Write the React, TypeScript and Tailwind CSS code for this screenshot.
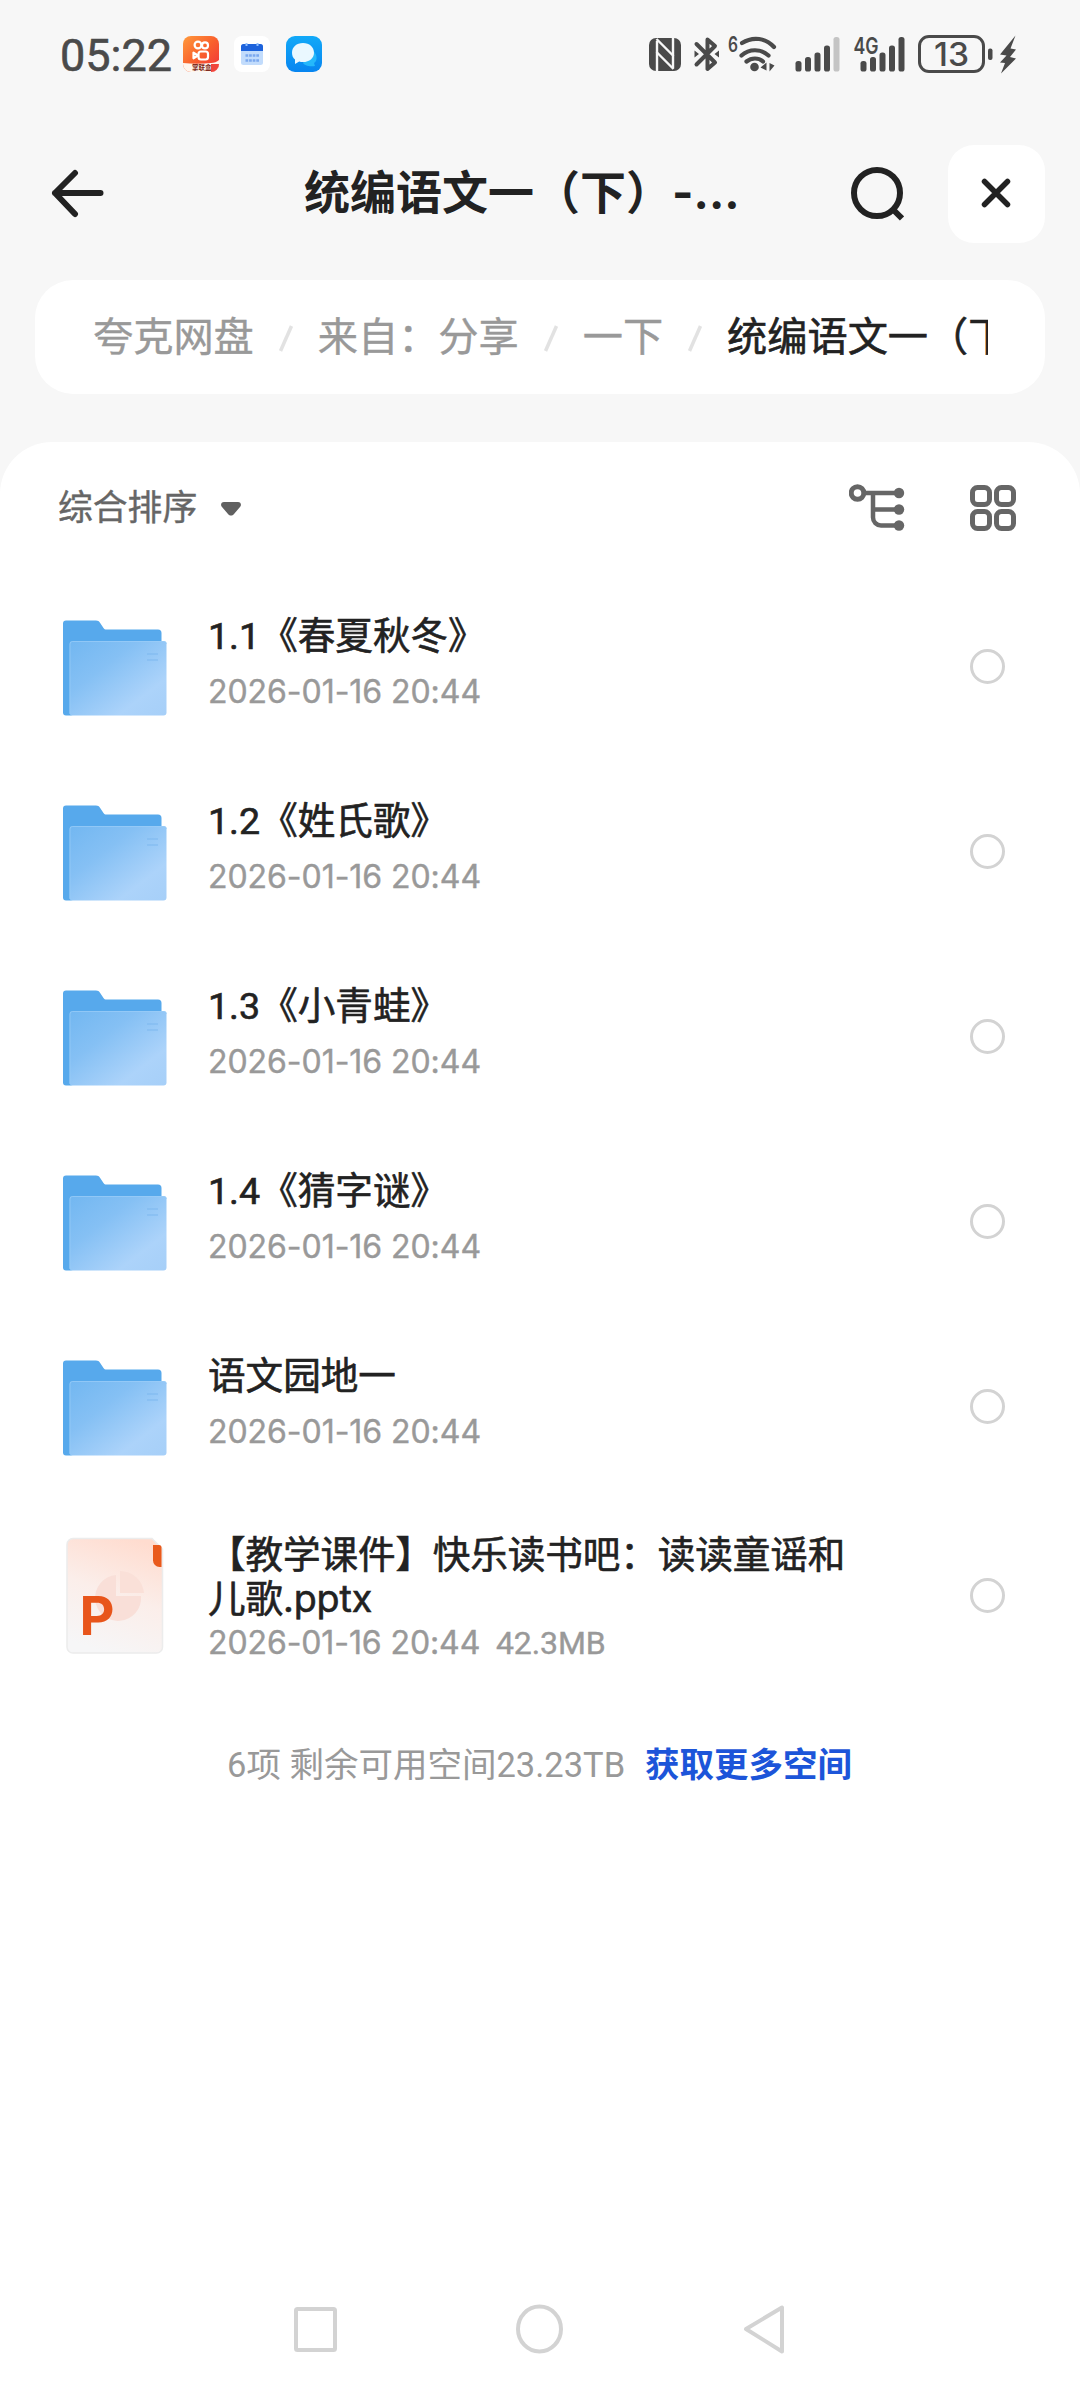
import type { ReactNode } from 'react';

const files = [
    { name: '1.1《春夏秋冬》', date: '2026-01-16 20:44' },
    { name: '1.2《姓氏歌》', date: '2026-01-16 20:44' },
    { name: '1.3《小青蛙》', date: '2026-01-16 20:44' },
    { name: '1.4《猜字谜》', date: '2026-01-16 20:44' },
    { name: '语文园地一', date: '2026-01-16 20:44' },
];

const StatusBar = () => (
    <div className="h-[108px] flex items-center pl-[60px] text-[#4a4a4a]">
        <span className="w-[123px] mt-0.5 text-[45px] leading-none font-[Roboto] [-webkit-text-stroke:0.6px_#4a4a4a]">05:22</span>

        {/* running apps */}
        <svg className="w-9 h-9" viewBox="0 0 36 36">
            <defs>
                <linearGradient id="ks" x1="0" y1="0" x2="1" y2="1">
                    <stop offset="0" stopColor="#ff9a3c" />
                    <stop offset="0.5" stopColor="#f9602d" />
                    <stop offset="1" stopColor="#f0303c" />
                </linearGradient>
            </defs>
            <rect width="36" height="36" rx="8" fill="url(#ks)" />
            <g fill="none" stroke="#fff" strokeWidth="2.2">
                <circle cx="15" cy="9" r="3.4" />
                <circle cx="22" cy="9.4" r="3" />
                <rect x="15.500" y="15.500" width="9.500" height="8" rx="2.400" />
                <path d="M15 19.500l-4.500-2.800v5.600z" strokeLinejoin="round" />
            </g>
            <path d="M0 27c9 1 18 1 28 0c3 0 6-1 8-3v4a8 8 0 0 1-8 8H8a8 8 0 0 1-8-8z" fill="#fff6ee" />
            <text x="9" y="34" fontSize="6.500" fontWeight="700" fill="#7a1f14">掌联盒</text>
            <path d="M28 28h8a8 8 0 0 1-8 8z" fill="#f0453c" />
        </svg>
        <svg className="w-9 h-9 ml-[15px]" viewBox="0 0 36 36">
            <rect width="36" height="36" rx="8" fill="#fff" />
            <rect x="7" y="8" width="22" height="21" rx="2.5" fill="#c2dcfc" />
            <path d="M7 15v-4.500a2.500 2.500 0 0 1 2.500-2.500h17a2.500 2.500 0 0 1 2.500 2.500V15z" fill="#1d63dc" />
            <path d="M12.500 7v3M23.500 7v3" stroke="#8fc0ff" strokeWidth="2" />
            <path d="M11.500 19.500h13.500M11.500 24.500h13.500" stroke="#7ba8ee" strokeWidth="2.600" strokeDasharray="2.700 0.900" />
        </svg>
        <svg className="w-9 h-9 ml-4" viewBox="0 0 36 36">
            <defs>
                <linearGradient id="msg" x1="0" y1="0" x2="0" y2="1">
                    <stop offset="0" stopColor="#12a9f8" />
                    <stop offset="1" stopColor="#0785f0" />
                </linearGradient>
            </defs>
            <rect width="36" height="36" rx="9" fill="url(#msg)" />
            <path d="M24 13c8 3 8 12 4 14l1 3c-6 1-11-1-12-3z" fill="#25b8fb" />
            <path d="M17 7c6.500 0 11 4.200 11 9.700s-4.500 9.300-11 9.300c-1.600 0-2.600-.2-3.800-.6L9 28v-4.500C7 22 6 19.500 6 16.700C6 11.200 10.500 7 17 7z" fill="#eaf8ff" />
        </svg>

        {/* system indicators */}
        <svg className="w-[380px] h-16 ml-[319px]" viewBox="642 22 380 64" fill="none">
            <rect x="650" y="38" width="32" height="33" rx="7" fill="#4a4a4a" />
            <path d="M658 72V41M674 37v31" stroke="#f7f7f7" strokeWidth="2.400" />
            <path d="M657.500 39L674.500 56M657.500 52L674.500 69" stroke="#f7f7f7" strokeWidth="2.400" />
            <path d="M697.500 44L716 62.500L708.500 69V39.500L716 46L697.500 64.500" stroke="#4a4a4a" strokeWidth="4" strokeLinejoin="round" strokeLinecap="round" />
            <path d="M695.500 50.500v7l4.500-3.500zM720 50.500v7l-4.500-3.500z" fill="#4a4a4a" />
            <text x="729" y="51.500" fontSize="21" fontWeight="600" fill="#4a4a4a" textLength="10" lengthAdjust="spacingAndGlyphs">6</text>
            <g stroke="#4a4a4a" strokeLinecap="round" strokeWidth="4.200">
                <path d="M742.500 55.500C750 48.500 762 48.500 769.500 55.500" />
                <path d="M743 43C754 36 767 38 775 47" />
                <path d="M747.500 61.500C752.500 57.500 759.500 57.500 764 61.500" />
            </g>
            <circle cx="755.500" cy="67" r="4.300" fill="#4a4a4a" />
            <path d="M761.500 67.500l6-5v8M770.500 63v8.500l5-6" fill="#4a4a4a" />
            <g fill="#4a4a4a">
                <rect x="796.500" y="61" width="6" height="10.500" rx="2.600" />
                <rect x="806" y="57" width="6" height="14.500" rx="2.600" />
                <rect x="815.500" y="52.500" width="6" height="19" rx="2.600" />
                <rect x="825" y="45.500" width="6" height="26" rx="2.600" />
                <rect x="834.500" y="37" width="6" height="34.500" rx="2.600" fill="#c4c4c4" />
                <text x="854.500" y="53.500" fontSize="23" fontWeight="600" textLength="25" lengthAdjust="spacingAndGlyphs">4G</text>
                <rect x="861.500" y="61" width="6" height="10.500" rx="2.600" />
                <rect x="871" y="57" width="6" height="14.500" rx="2.600" />
                <rect x="880.500" y="52.500" width="6" height="19" rx="2.600" />
                <rect x="890" y="45.500" width="6" height="26" rx="2.600" />
                <rect x="899.500" y="37" width="6" height="34.500" rx="2.600" />
            </g>
            <rect x="920.500" y="36.500" width="64" height="35" rx="9.500" stroke="#4a4a4a" strokeWidth="3" />
            <text x="935" y="66" fontSize="32" fontWeight="500" fill="#4a4a4a" textLength="35" lengthAdjust="spacingAndGlyphs">13</text>
            <rect x="989" y="48.500" width="4.500" height="11.500" rx="2" fill="#4a4a4a" />
            <path d="M1016.500 35.500L1001 54.500L1007.500 55.500L1001 62.500L1006 63L1002 73.500L1017 58.500L1011 57L1017 49.500L1011.500 48.500z" fill="#4a4a4a" />
        </svg>
    </div>
);

const FolderIcon = () => (
    <svg className="w-[104px] h-24 mt-[3px]" viewBox="0 0 104 96">
        <defs>
            <linearGradient id="folder" x1="0" y1="0" x2="1" y2="1">
                <stop offset="0" stopColor="#72b7f1" />
                <stop offset="0.35" stopColor="#85c0f4" />
                <stop offset="0.75" stopColor="#acd3fa" />
                <stop offset="1" stopColor="#a6cff8" />
            </linearGradient>
        </defs>
        <path d="M0 3.500A3 3 0 0 1 3 .5h30c2 0 3 .8 4 2.300l3.500 5.200c.8 1 1.500 1.500 3 1.500H95a3.500 3.500 0 0 1 3.500 3.500V70L8 95.500H3a3 3 0 0 1-3-3z" fill="#57a9ec" />
        <rect x="6.500" y="21" width="97" height="74.500" rx="3" fill="url(#folder)" />
        <path d="M7 94V24a2.500 2.500 0 0 1 2.500-2.500H101a2.500 2.500 0 0 1 2.500 2.500" fill="none" stroke="#9bcdf8" strokeOpacity="0.7" />
        <path d="M84 34h11M84 40h11" stroke="#79b5ee" strokeOpacity="0.6" strokeWidth="1.500" />
    </svg>
);

const PptIcon = () => (
    <svg className="w-[98px] h-[118px]" viewBox="0 0 98 118">
        <defs>
            <linearGradient id="ppt" x1="0.7" y1="0" x2="0.4" y2="1">
                <stop offset="0" stopColor="#ffdccf" />
                <stop offset="0.5" stopColor="#fbeeea" />
                <stop offset="1" stopColor="#f6f6f7" />
            </linearGradient>
        </defs>
        <path d="M7 1.500h79L96.500 12v98a6 6 0 0 1-6 6H7a6 6 0 0 1-6-6V7.500a6 6 0 0 1 6-6z" fill="url(#ppt)" stroke="#ececec" strokeWidth="1.500" />
        <path d="M50 38a23 23 0 1 0 25 21H50z" fill="#f9dfd8" />
        <path d="M54 34a24 24 0 0 1 24 22H54z" fill="#fae0d8" />
        <path d="M87 8h6a2.500 2.500 0 0 1 2.500 2.500V30h-2a6.500 6.500 0 0 1-6.500-6.500z" fill="#e95a1c" />
        <text x="13.500" y="97.500" fontSize="54" fontWeight="700" fill="#e8551b">P</text>
    </svg>
);

const FileRow = ({ icon, children }: { icon: ReactNode; children: ReactNode }) => (
    <div className="h-[185px] flex items-center pl-[63px] pr-[75px]">
        <div className="w-[145px] shrink-0 flex items-center">{icon}</div>
        <div className="flex-1">{children}</div>
        <div className="w-[35px] h-[35px] rounded-full border-[3px] border-[#d3d3d3]" />
    </div>
);

const Slash = () => (
    <svg className="w-[14px] h-[27px] mx-[25px] mt-0.5 shrink-0" viewBox="0 0 14 27">
        <path d="M12.500 1L1.500 26" stroke="#e2e2e2" strokeWidth="3.500" />
    </svg>
);

const App = () => {
    return (
        <div className="w-[1080px] h-[2387px] flex flex-col bg-[#f7f7f7] overflow-hidden font-[Inter,'Noto_Sans_CJK_SC',sans-serif]" lang="zh-CN">
            <StatusBar />

            {/* title bar */}
            <div className="h-[172px] flex items-center pl-[50px] pr-[35px]">
                <svg className="w-[54px] h-[50px]" viewBox="0 0 54 50" fill="none" stroke="#222" strokeWidth="6" strokeLinecap="round" strokeLinejoin="round">
                    <path d="M25 4L5 24L25 45M5 24H50.500" />
                </svg>
                <h1 className="ml-[200px] w-[544px] text-[46px] leading-none font-bold text-[#222] whitespace-nowrap mb-1">
                    统编语文一（下）-...
                </h1>
                <svg className="w-14 h-14" viewBox="0 0 56 56" fill="none" stroke="#222" strokeWidth="6">
                    <circle cx="29" cy="27" r="23" />
                    <path d="M45 43.500l9 9" />
                </svg>
                <div className="ml-auto w-[97px] h-[98px] rounded-[26px] bg-white flex items-center justify-center">
                    <svg className="w-8 h-8 mr-0.5 mb-0.5" viewBox="0 0 32 32" stroke="#222" strokeWidth="5.500" strokeLinecap="round">
                        <path d="M4.500 4.500l23 23M27.500 4.500L4.500 27.500" />
                    </svg>
                </div>
            </div>

            {/* breadcrumb */}
            <div className="mx-[35px] h-[114px] shrink-0 rounded-[38px] bg-white pl-[58px] pr-[57px] flex">
                <div className="flex-1 flex items-center overflow-hidden whitespace-nowrap text-[40.2px] leading-none text-[#999] [-webkit-text-stroke:0.4px_currentColor]">
                    <span>夸克网盘</span>
                    <Slash />
                    <span>来自：分享</span>
                    <Slash />
                    <span>一下</span>
                    <Slash />
                    <span className="text-[#222] [-webkit-text-stroke:0.6px_#222]">统编语文一（下）</span>
                </div>
            </div>

            <div className="mt-12 flex-1 rounded-t-[52px] bg-white flex flex-col">
                {/* sort row */}
                <div className="h-[132px] flex items-center pl-[58px] pr-16 text-[#666]">
                    <span className="text-[34.800px] leading-none mb-0.5 [-webkit-text-stroke:0.4px_#666]">综合排序</span>
                    <svg className="w-5 h-[14px] ml-6 mt-0.5" viewBox="0 0 20 14">
                        <path d="M3 0h14c3 0 3.800 3 2 5l-6 7c-1.800 2-4.200 2-6 0L1 5C-.8 3 0 0 3 0z" fill="#606060" />
                    </svg>
                    <svg className="ml-auto w-14 h-12" viewBox="0 0 56 48" fill="none" stroke="#666" strokeWidth="4.500">
                        <circle cx="8.500" cy="9" r="6.300" strokeWidth="5" />
                        <path d="M15 9H50M24 9V33.500a8 8 0 0 0 8 8H50M24 25.500H50" />
                        <g fill="#666" stroke="none">
                            <circle cx="50" cy="9" r="5.200" />
                            <circle cx="50" cy="25.500" r="5.200" />
                            <circle cx="50" cy="41.500" r="5.200" />
                        </g>
                    </svg>
                    <svg className="ml-[65px] w-[46px] h-[46px]" viewBox="0 0 46 46" fill="none" stroke="#666" strokeWidth="5">
                        <rect x="2.500" y="2.500" width="17" height="17" rx="5" />
                        <rect x="26.500" y="2.500" width="17" height="17" rx="5" />
                        <rect x="2.500" y="26.500" width="17" height="17" rx="5" />
                        <rect x="26.500" y="26.500" width="17" height="17" rx="5" />
                    </svg>
                </div>

                {files.map((file) => (
                    <FileRow key={file.name} icon={<FolderIcon />}>
                        <p className="text-[37.600px] leading-[44px] text-[#222] [-webkit-text-stroke:0.6px_#222] font-[Roboto,'Noto_Sans_CJK_SC',sans-serif]">{file.name}</p>
                        <p className="mt-3 mb-1.5 text-[32px] leading-[44px] text-[#999] tracking-[-0.05px] [-webkit-text-stroke:0.4px_#999]">{file.date}</p>
                    </FileRow>
                ))}

                <div className="mt-1">
                    <FileRow icon={<div className="pl-[3px]"><PptIcon /></div>}>
                        <p className="mt-1.5 text-[37.600px] leading-[44px] text-[#222] [-webkit-text-stroke:0.6px_#222] whitespace-nowrap tracking-[-0.1px]">
                            【教学课件】快乐读书吧：读读童谣和<br />儿歌.pptx
                        </p>
                        <p className="text-[32px] leading-[44px] text-[#999] whitespace-pre tracking-[-0.1px] [-webkit-text-stroke:0.4px_#999]">
                            2026-01-16 20:44<span className="font-[Roboto]">{'  42.3MB'}</span>
                        </p>
                    </FileRow>
                </div>

                <div className="mt-[52px] flex items-center pl-[227px] text-[34.500px] leading-[50px] whitespace-nowrap">
                    <span className="w-[418px] text-[#999] font-[Roboto,'Noto_Sans_CJK_SC',sans-serif]">6项 剩余可用空间23.23TB</span>
                    <span className="font-bold text-[#1c55d9]">获取更多空间</span>
                </div>

                {/* system navigation */}
                <div className="mt-auto h-[116px] flex items-center px-[291px] justify-between">
                    <svg className="w-12 h-[50px]" viewBox="0 0 48 50" fill="none" stroke="#d3d3d3" strokeWidth="4">
                        <rect x="5" y="5" width="39" height="41" rx="1.500" />
                    </svg>
                    <svg className="w-[50px] h-[52px]" viewBox="0 0 50 52" fill="none" stroke="#d3d3d3" strokeWidth="4">
                        <ellipse cx="23.500" cy="26" rx="21.500" ry="22.500" />
                    </svg>
                    <svg className="w-[46px] h-[52px]" viewBox="0 0 46 52" fill="none" stroke="#d3d3d3" strokeWidth="4" strokeLinejoin="round">
                        <path d="M39 4.500V48.500L3 26z" />
                    </svg>
                </div>
            </div>
        </div>
    );
};

export default App;
